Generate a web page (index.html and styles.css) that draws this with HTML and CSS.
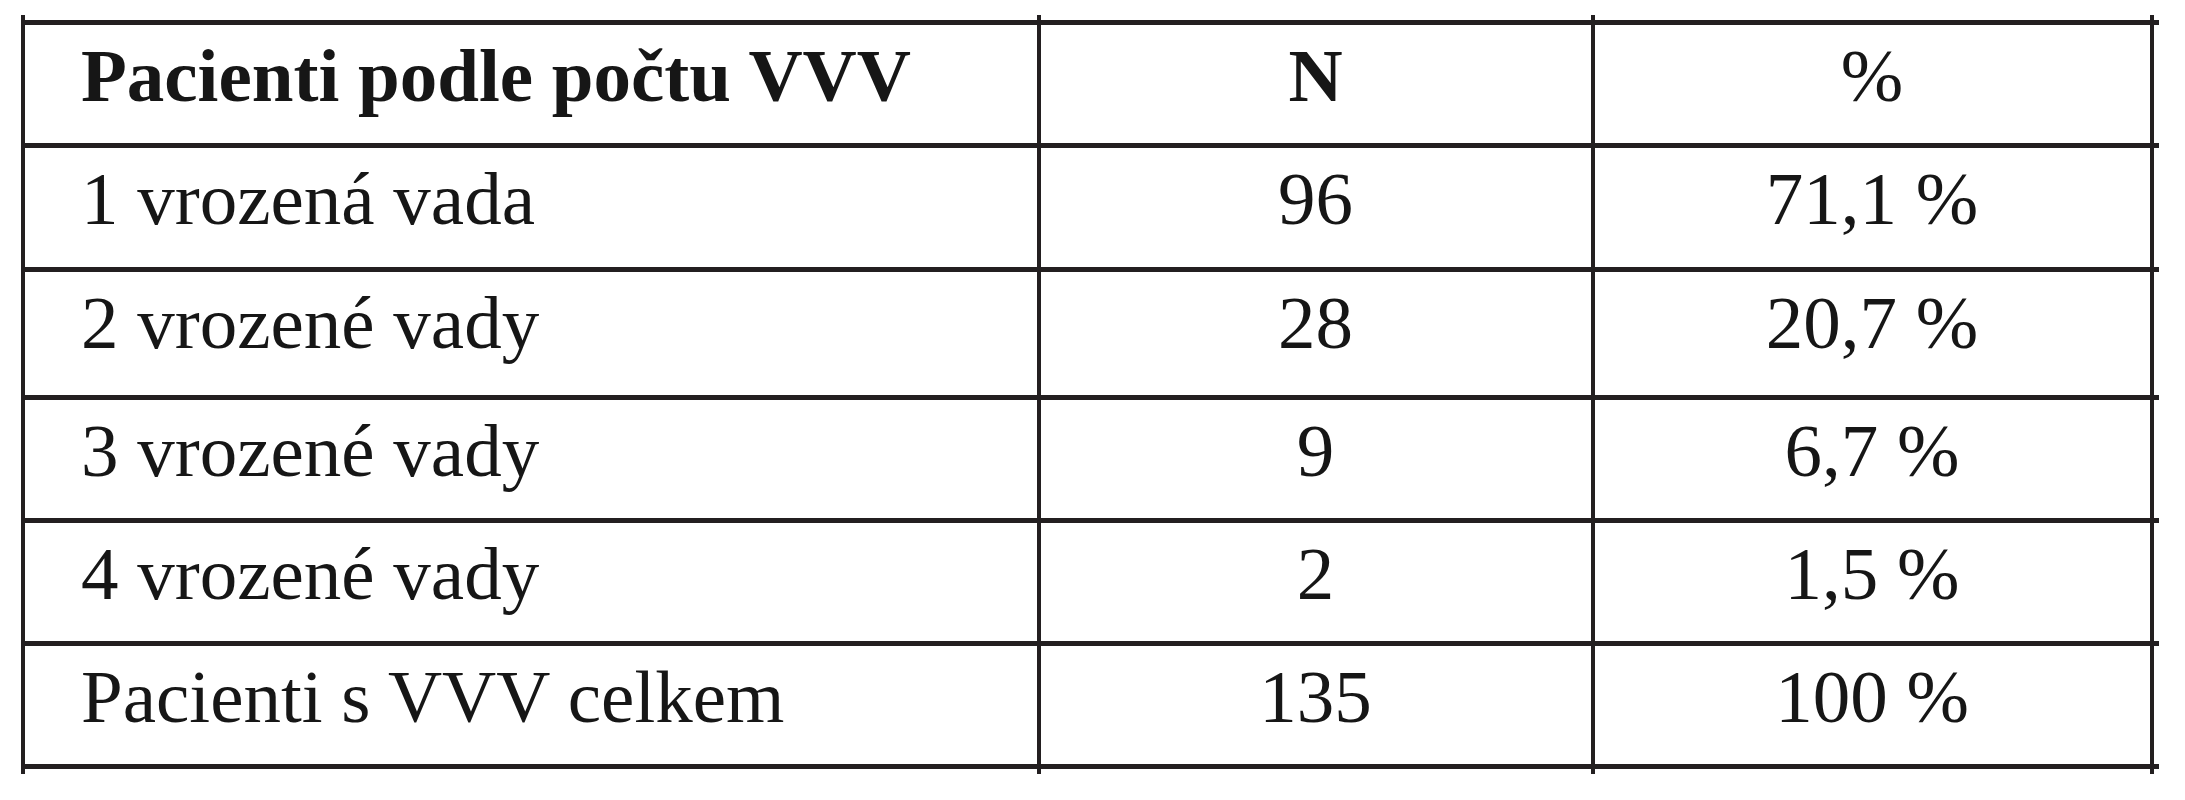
FILE: index.html
```html
<!DOCTYPE html>
<html lang="cs">
<head>
<meta charset="utf-8">
<title>Pacienti podle počtu VVV</title>
<link rel="stylesheet" href="styles.css">
</head>
<body>
<div class="table" role="table">
  <div class="tick"></div><div class="tick"></div><div class="tick"></div><div class="tick end"></div>

  <div class="cell label head r1">Pacienti podle počtu VVV</div>
  <div class="cell num head r1">N</div>
  <div class="cell num pct-head r1">%</div>
  <div class="cell ext r1"></div>

  <div class="cell label r2">1 vrozená vada</div>
  <div class="cell num r2">96</div>
  <div class="cell num r2">71,1 %</div>
  <div class="cell ext r2"></div>

  <div class="cell label r3">2 vrozené vady</div>
  <div class="cell num r3">28</div>
  <div class="cell num r3">20,7 %</div>
  <div class="cell ext r3"></div>

  <div class="cell label r4">3 vrozené vady</div>
  <div class="cell num r4">9</div>
  <div class="cell num r4">6,7 %</div>
  <div class="cell ext r4"></div>

  <div class="cell label r5">4 vrozené vady</div>
  <div class="cell num r5">2</div>
  <div class="cell num r5">1,5 %</div>
  <div class="cell ext r5"></div>

  <div class="cell label r6">Pacienti s VVV celkem</div>
  <div class="cell num r6">135</div>
  <div class="cell num r6">100 %</div>
  <div class="cell ext r6"></div>

  <div class="foot"></div><div class="foot"></div><div class="foot"></div><div class="foot end"></div>
</div>
</body>
</html>
```

FILE: styles.css
```css
html, body {
  margin: 0;
  padding: 0;
  background: #ffffff;
}

body {
  font-family: "Liberation Serif", "Times New Roman", serif;
  color: #161616;
}

.table {
  display: grid;
  grid-template-columns: 1015.5px 554px 559px 9px;
  grid-template-rows: 5px 123px 124px 128px 123px 123px 123px 10px;
  margin: 15px 0 0 21px;
  width: max-content;
}

.tick {
  box-sizing: border-box;
  border-left: 4px solid #231f20;
}

.foot {
  box-sizing: border-box;
  border-left: 4px solid #231f20;
  border-top: 5px solid #231f20;
}

.cell {
  box-sizing: border-box;
  border-left: 4px solid #231f20;
  border-top: 5px solid #231f20;
  font-size: 75px;
  line-height: 75px;
  padding-top: 13px;
  white-space: nowrap;
}

.label {
  padding-left: 56px;
  text-align: left;
}

.num {
  text-align: center;
}

.head {
  font-weight: bold;
}

.pct-head {
  font-weight: normal;
}

.ext {
  padding: 0;
}
```
